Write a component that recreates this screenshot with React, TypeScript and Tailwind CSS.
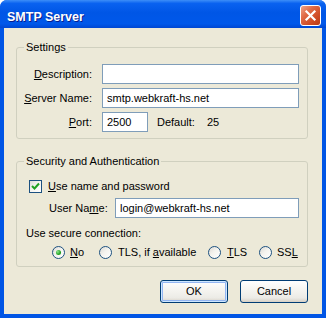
import React from "react";

function Field({ className = "", value = "" }: { className?: string; value?: string }) {
    return (
        <div className={`h-[20px] bg-white border border-[#7F9DB9] flex items-center px-[4px] ${className}`}>
            {value}
        </div>
    );
}

function Radio({ checked = false }: { checked?: boolean }) {
    return (
        <span className="w-[13px] h-[13px] rounded-full border border-[#1C5180] bg-[linear-gradient(135deg,#DCDAD5_0%,#F4F3EE_45%,#FFFFFF_100%)] flex items-center justify-center shrink-0">
            {checked && (
                <span className="w-[5px] h-[5px] rounded-full bg-[radial-gradient(circle_at_35%_35%,#8EE68E_0%,#21A121_60%,#1A8A1A_100%)]" />
            )}
        </span>
    );
}

function Button({ children, focused = false }: { children: React.ReactNode; focused?: boolean }) {
    return (
        <div
            className={`w-[68px] h-[23px] rounded-[3px] border border-[#003C74] flex items-center justify-center bg-[linear-gradient(180deg,#FFFFFF_0%,#F6F5F1_40%,#ECEBE6_80%,#D6D0C5_100%)] ${
                focused ? "shadow-[inset_0_0_0_1px_#CEE7FF,inset_0_0_0_2px_#94B6F2]" : ""
            }`}
        >
            {children}
        </div>
    );
}

export default function App() {
    return (
        <div className="w-[326px] h-[318px] flex flex-col bg-[#0055E5] rounded-t-[7px] overflow-hidden text-[11px] leading-[13px] text-black font-['Liberation_Sans',Arial,sans-serif]">
            {/* Title Bar */}
            <div className="h-[28px] shrink-0 flex items-start justify-between pl-[7px] pr-[5px] bg-[linear-gradient(180deg,#3D8EF8_0%,#0A62F0_12%,#0056E6_45%,#0058EA_85%,#0047D2_100%)]">
                <span className="mt-[10px] text-[12.5px] leading-[14px] font-bold text-white [text-shadow:1px_1px_0_#0A1E8C]">
                    SMTP Server
                </span>
                <div className="mt-[5px] w-[21px] h-[21px] rounded-[3px] border border-white bg-[linear-gradient(135deg,#EFA48A_0%,#E06A45_35%,#CF4B24_70%,#B83A16_100%)] flex items-center justify-center">
                    <svg width="13" height="13" viewBox="0 0 13 13">
                        <path d="M2.5 2.5 L10.5 10.5 M10.5 2.5 L2.5 10.5" stroke="white" strokeWidth="2.2" strokeLinecap="square" />
                    </svg>
                </div>
            </div>

            {/* Client Area */}
            <div className="flex-1 mx-[4px] mb-[4px] bg-[#ECE9D8] pt-[13px] pl-[12px] pr-[14px] flex flex-col">
                {/* Settings */}
                <fieldset className="border border-[#D0D0BF] rounded-[3px] p-0 m-0">
                    <legend className="ml-[7px] px-[2px] leading-[13px]">Settings</legend>
                    <div className="pt-[10px] pb-[6px] pr-[8px] flex flex-col gap-[4px]">
                        <div className="flex items-center">
                            <span className="w-[75px] text-right"><u>D</u>escription:</span>
                            <Field className="ml-[10px] flex-1" />
                        </div>
                        <div className="flex items-center">
                            <span className="w-[75px] text-right"><u>S</u>erver Name:</span>
                            <Field className="ml-[10px] flex-1" value="smtp.webkraft-hs.net" />
                        </div>
                        <div className="flex items-center">
                            <span className="w-[75px] text-right"><u>P</u>ort:</span>
                            <Field className="ml-[10px] w-[46px]" value="2500" />
                            <span className="ml-[9px] w-[50px]">Default:</span>
                            <span>25</span>
                        </div>
                    </div>
                </fieldset>

                {/* Security and Authentication */}
                <fieldset className="mt-[16px] border border-[#D0D0BF] rounded-[3px] p-0 m-0">
                    <legend className="ml-[7px] px-[2px] leading-[13px]">Security and Authentication</legend>
                    <div className="pt-[11px] pb-[7px] pl-[9px] pr-[8px] flex flex-col">
                        <div className="h-[15px] flex items-center ml-[3px]">
                            <span className="w-[13px] h-[13px] border border-[#1C5180] bg-[linear-gradient(135deg,#DCDAD5_0%,#F4F3EE_45%,#FFFFFF_100%)] flex items-center justify-center">
                                <svg width="9" height="9" viewBox="0 0 9 9">
                                    <path d="M1 4 L3.5 6.5 L8 1.5" fill="none" stroke="#21A121" strokeWidth="2" />
                                </svg>
                            </span>
                            <span className="ml-[6px]"><u>U</u>se name and password</span>
                        </div>
                        <div className="mt-[4px] flex items-center ml-[23px]">
                            <span className="w-[66px]">User Na<u>m</u>e:</span>
                            <Field className="flex-1" value="login@webkraft-hs.net" />
                        </div>
                        <div className="mt-[8px] h-[14px] flex items-center">Use secure connection:</div>
                        <div className="mt-[5px] h-[14px] flex items-center ml-[26px]">
                            <div className="w-[47px] flex items-center">
                                <Radio checked />
                                <span className="ml-[5px]"><u>N</u>o</span>
                            </div>
                            <div className="w-[109px] flex items-center">
                                <Radio />
                                <span className="ml-[6px]">TLS, if <u>a</u>vailable</span>
                            </div>
                            <div className="w-[51px] flex items-center">
                                <Radio />
                                <span className="ml-[6px]"><u>T</u>LS</span>
                            </div>
                            <div className="flex items-center">
                                <Radio />
                                <span className="ml-[5px]">SS<u>L</u></span>
                            </div>
                        </div>
                    </div>
                </fieldset>

                {/* Buttons */}
                <div className="mt-[13px] flex justify-end gap-[12px]">
                    <Button focused>OK</Button>
                    <Button>Cancel</Button>
                </div>
            </div>
        </div>
    );
}
